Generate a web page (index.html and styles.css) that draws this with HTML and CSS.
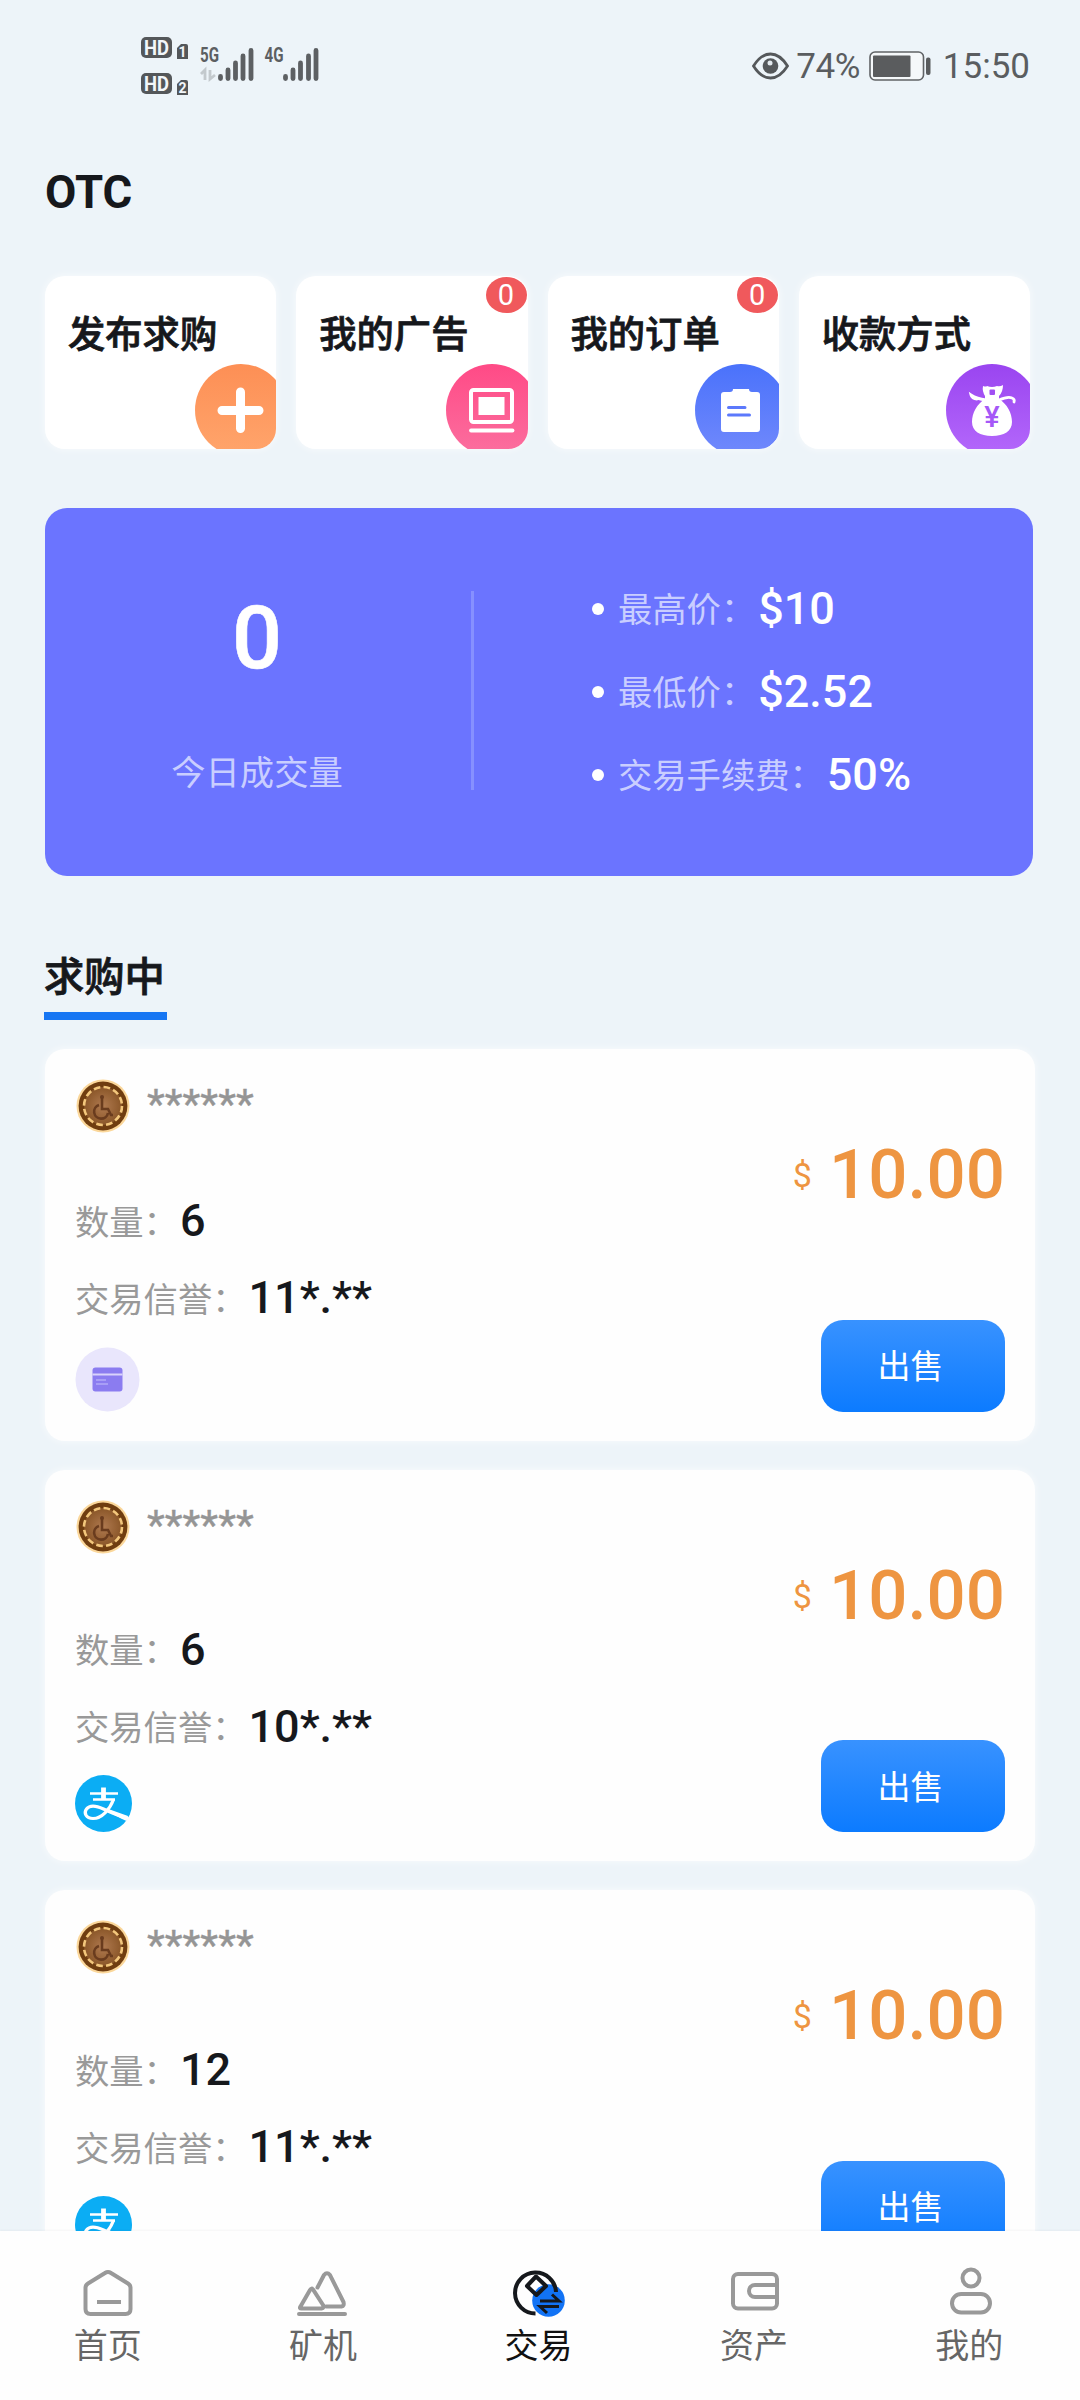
FILE: index.html
```html
<!DOCTYPE html>
<html lang="zh-CN">
<head>
<meta charset="utf-8">
<title>OTC</title>
<link rel="stylesheet" href="styles.css">
</head>
<body>
<svg class="defs" width="0" height="0" aria-hidden="true">
  <defs>
    <radialGradient id="coinFace"><stop offset="0" stop-color="#b07a50"/><stop offset="1" stop-color="#8a5628"/></radialGradient>
    <linearGradient id="orange" x1="0" y1="0" x2="0" y2="1"><stop offset="0" stop-color="#fd8f55"/><stop offset="1" stop-color="#ffa56c"/></linearGradient>
    <linearGradient id="pink" x1="0" y1="0" x2="0" y2="1"><stop offset="0" stop-color="#ff4a86"/><stop offset="1" stop-color="#fb6f9f"/></linearGradient>
    <linearGradient id="blue" x1="0" y1="0" x2="0" y2="1"><stop offset="0" stop-color="#4a72fb"/><stop offset="1" stop-color="#7189fc"/></linearGradient>
    <linearGradient id="violet" x1="0" y1="0" x2="0" y2="1"><stop offset="0" stop-color="#9a45f0"/><stop offset="1" stop-color="#b468fb"/></linearGradient>
  </defs>
  <symbol id="coin" viewBox="0 0 54 54">
    <circle cx="27" cy="27" r="26.5" fill="#fbd79a"/>
    <circle cx="27" cy="27" r="24.4" fill="#6f3d10"/>
    <circle cx="27" cy="27" r="19" fill="url(#coinFace)"/>
    <circle cx="27" cy="27" r="19" fill="none" stroke="#f3c77c" stroke-width="2.6" stroke-dasharray="6.6 3.348"/>
    <path d="M26 18v12h6l3 6h2M23 26a7 7 0 1 0 9 8" fill="none" stroke="#6a3c1e" stroke-width="2.6"/>
    <circle cx="26" cy="18" r="2" fill="#6a3c1e"/>
  </symbol>
  <symbol id="alipay" viewBox="0 0 57 57">
    <circle cx="28.5" cy="28.5" r="28.5" fill="#0badf4"/>
    <path d="M15 18.5h28M18 24.5h22" fill="none" stroke="#fff" stroke-width="2.6"/>
    <path d="M28.5 12.5v12" fill="none" stroke="#fff" stroke-width="4.8"/>
    <path d="M38.500 24.500C35 34 27 43.500 18 43.500C11 43.500 8.500 38 11.500 34C15 29.500 22 31 28.500 34C37 38 44 41 53.500 43.500" fill="none" stroke="#fff" stroke-width="3.2"/>
    <path d="M32 33.500L53 41L51.500 46C45 43.500 38 39 30 35.800z" fill="#fff"/>
  </symbol>
  <symbol id="bankcard" viewBox="0 0 65 65">
    <circle cx="32.500" cy="32.500" r="32" fill="#e9e6fc"/>
    <rect x="17.500" y="20.500" width="30" height="24" rx="3" fill="#8b7cf0"/>
    <path d="M17.500 27.500h30" stroke="#d9d3fb" stroke-width="2"/>
    <path d="M21 33h10M21 37h12" stroke="#b3a9f8" stroke-width="1.400"/>
  </symbol>
</svg>

<div class="screen">
  <header class="status">
    <svg class="status-left" width="200" height="70" viewBox="0 0 200 70">
      <g fill="#54575a">
        <rect x="1" y="5" width="31" height="21" rx="5"/>
        <rect x="1" y="41" width="31" height="21" rx="5"/>
        <path d="M37 16l4-4h5q2 0 2 2v13h-11zM37 52l4-4h5q2 0 2 2v13h-11z"/>
      </g>
      <g class="badge-text" fill="#f2f6fa">
        <text x="4" y="23" font-size="21" textLength="25" lengthAdjust="spacingAndGlyphs">HD</text>
        <text x="4" y="59" font-size="21" textLength="25" lengthAdjust="spacingAndGlyphs">HD</text>
        <text x="38.500" y="25" font-size="14">1</text>
        <text x="38.500" y="61" font-size="14">2</text>
      </g>
      <g class="badge-text" fill="#5c5f62">
        <text x="60" y="30" font-size="20" textLength="19" lengthAdjust="spacingAndGlyphs">5G</text>
        <text x="124.500" y="30" font-size="20" textLength="19" lengthAdjust="spacingAndGlyphs">4G</text>
      </g>
      <path d="M61 42l4-4v10M70 38v9l5-4" fill="none" stroke="#c3c9cd" stroke-width="2.800"/>
      <path d="M80.500 44.500v2M88 38v8.500M95.500 31v15.500M103 24v22.500M111 18.500v28M145.500 44.500v2M153 38v8.500M160.500 31v15.500M168.500 24v22.500M176 18.500v28" stroke="#5d6063" stroke-width="4.800" stroke-linecap="round"/>
    </svg>
    <div class="status-right">
      <svg width="37" height="28" viewBox="0 0 37 28">
        <path d="M1.500 14Q9 2 18.500 2T35.500 14Q28 26 18.500 26T1.500 14z" fill="none" stroke="#55585b" stroke-width="2.800"/>
        <circle cx="18.500" cy="14" r="7.800" fill="#55585b"/><circle cx="18" cy="11" r="2.500" fill="#e3e9ee"/>
      </svg>
      <span class="percent">74%</span>
      <svg class="battery" width="62" height="30" viewBox="0 0 62 30">
        <rect x="1" y="1" width="53.500" height="28" rx="5" fill="#f5f8fa" stroke="#606366" stroke-width="1.600"/>
        <rect x="4" y="4.500" width="37.500" height="21.500" rx="1" fill="#5a5c5e"/>
        <rect x="57" y="6.500" width="4.500" height="17.500" rx="2" fill="#5a5c5e"/>
      </svg>
      <span class="clock">15:50</span>
    </div>
  </header>

  <main class="content">
    <h1 class="page-title">OTC</h1>

    <section class="tiles">
      <div class="tile">
        <span>发布求购</span>
        <svg class="tile-icon" viewBox="0 0 92 92"><circle cx="46" cy="46" r="46" fill="url(#orange)"/><path d="M45.500 28v36.500M27 46.500h37" stroke="#fff" stroke-width="9" stroke-linecap="round"/></svg>
      </div>
      <div class="tile">
        <span>我的广告</span>
        <svg class="tile-icon" viewBox="0 0 92 92"><circle cx="46" cy="46" r="46" fill="url(#pink)"/><rect x="25" y="26" width="41" height="32" rx="2.500" fill="none" stroke="#fff" stroke-width="4"/><rect x="32.500" y="33" width="26" height="18" fill="#fff"/><path d="M25 66.500h41.500" stroke="#fff" stroke-width="3.800" stroke-linecap="round"/></svg>
        <b class="badge">0</b>
      </div>
      <div class="tile">
        <span>我的订单</span>
        <svg class="tile-icon wide" viewBox="0 0 92 92"><circle cx="46" cy="46" r="46" fill="url(#blue)"/><path d="M29 28h6q3 0 3-3h16q0 3 3 3h5q3 0 3 3v34q0 3-3 3H29q-3 0-3-3V31q0-3 3-3z" fill="#fff"/><path d="M33.500 43.500h16.500M33.500 51h21" stroke="#5c79fc" stroke-width="3" stroke-linecap="round"/></svg>
        <b class="badge">0</b>
      </div>
      <div class="tile">
        <span>收款方式</span>
        <svg class="tile-icon wide" viewBox="0 0 92 92"><circle cx="46" cy="46" r="46" fill="url(#violet)"/><path d="M37 22q3 1 4 0q5 2 10 0q3 1 6-1q0 7-4 11v3c8 5 13 14 13 23c0 9-8 14-20 14s-20-5-20-14c0-9 5-18 13-23v-3q-3-5-2-10z" fill="#fff"/><rect x="43.500" y="25.500" width="5.500" height="5.500" rx="1" fill="#a04ff3"/><path d="M40 36q-9-1-15-5q1 4 6 4M53 36q9-4 13-2q3 1 2 4" fill="none" stroke="#fff" stroke-width="2.800" stroke-linecap="round"/><text class="yen" x="46" y="62.500" font-size="29" text-anchor="middle" fill="#a558f7">¥</text></svg>
      </div>
    </section>

    <section class="summary">
      <div class="volume"><strong>0</strong><span>今日成交量</span></div>
      <i class="divider"></i>
      <ul class="stats">
        <li><span>最高价：</span><b>$10</b></li>
        <li><span>最低价：</span><b>$2.52</b></li>
        <li><span>交易手续费：</span><b>50%</b></li>
      </ul>
    </section>

    <h2 class="tab">求购中</h2>

    <section class="orders">
      <article class="order">
        <div class="info">
          <div class="user"><svg class="avatar"><use href="#coin"/></svg><span>******</span></div>
          <p><span>数量：</span><b>6</b></p>
          <p><span>交易信誉：</span><b>11*.**</b></p>
          <svg class="pay-bank"><use href="#bankcard"/></svg>
        </div>
        <div class="deal"><div class="price"><small>$</small>10.00</div><button>出售</button></div>
      </article>
      <article class="order">
        <div class="info">
          <div class="user"><svg class="avatar"><use href="#coin"/></svg><span>******</span></div>
          <p><span>数量：</span><b>6</b></p>
          <p><span>交易信誉：</span><b>10*.**</b></p>
          <svg class="pay-ali"><use href="#alipay"/></svg>
        </div>
        <div class="deal"><div class="price"><small>$</small>10.00</div><button>出售</button></div>
      </article>
      <article class="order">
        <div class="info">
          <div class="user"><svg class="avatar"><use href="#coin"/></svg><span>******</span></div>
          <p><span>数量：</span><b>12</b></p>
          <p><span>交易信誉：</span><b>11*.**</b></p>
          <svg class="pay-ali"><use href="#alipay"/></svg>
        </div>
        <div class="deal"><div class="price"><small>$</small>10.00</div><button>出售</button></div>
      </article>
    </section>
  </main>

  <nav class="tabbar">
    <a><svg viewBox="0 0 56 56"><path d="M5.500 25q0-3 2.500-4.500L25 10q3-2 6 0l17 10.500q2.500 1.500 2.500 4.500v21q0 5-5 5h-35q-5 0-5-5z"/><path d="M17 39h24"/></svg><span>首页</span></a>
    <a><svg viewBox="0 0 56 56"><path d="M5.500 43.500L15 27q1.500-2.500 3-.5L28 42q1.500 3-1.500 3.500h-20q-2.500 0-1-2zM22.500 24.500L29 12q3-3.500 6 0L48.500 39q1 4-2 4.500H31M4 51h46" stroke-linecap="round"/></svg><span>矿机</span></a>
    <a class="active"><svg viewBox="0 0 56 56"><circle cx="38.500" cy="37.500" r="16.300" fill="#1273f5" stroke="none"/><path d="M25.500 50.500A20.500 20.500 0 1 1 46 29"/><path d="M26 13.500l10 9.500-9.500 9-9.500-9z" stroke-linejoin="round"/><path d="M30 38h19l-7-6.500M49 43.500H30l7 6.500" stroke-width="3"/></svg><span>交易</span></a>
    <a><svg viewBox="0 0 56 56"><rect x="7" y="11" width="44" height="34.500" rx="5"/><path d="M50 22H29a6 6 0 0 0 0 12h21"/></svg><span>资产</span></a>
    <a><svg viewBox="0 0 56 56"><circle cx="30" cy="15" r="8.500"/><rect x="11" y="31" width="38" height="18.500" rx="9.200"/></svg><span>我的</span></a>
  </nav>
</div>
</body>
</html>
```
FILE: styles.css
```css
* { box-sizing: border-box; }

body {
  margin: 0;
  font-family: Roboto, "Noto Sans CJK SC", sans-serif;
  color: #16181c;
}

h1, h2, p, ul { margin: 0; padding: 0; }

.defs { position: absolute; }

.screen {
  display: flex;
  flex-direction: column;
  width: 1080px;
  height: 2400px;
  overflow: hidden;
  background: #edf4f9;
}

/* status bar */
.status {
  display: flex;
  flex: none;
  justify-content: space-between;
  height: 132px;
  padding: 32px 50px 0 140px;
  color: #5a5d60;
}

.status-left .badge-text { font-weight: 700; }
.status-right { display: flex; align-items: center; height: 68px; font-size: 35px; }
.percent { margin-left: 7px; letter-spacing: -0.5px; }
.battery { margin: 0 12px 0 9px; }

/* page */
.content { flex: 1; min-height: 0; padding: 0 47px 0 45px; overflow: hidden; }

.page-title {
  height: 144px;
  padding-top: 31px;
  font-size: 45.500px;
  line-height: 60px;
  font-weight: 700;
}

.tiles {
  display: grid;
  grid-template-columns: repeat(4, 1fr);
  gap: 20px;
  height: 173px;
  margin-right: 3px;
}

.tile {
  position: relative;
  overflow: hidden;
  padding: 34px 23px;
  border-radius: 20px;
  background: #fff;
  box-shadow: 0 0 8px rgba(255, 255, 255, .7);
  font-size: 37.300px;
  line-height: 50px;
  font-weight: 500;
  -webkit-text-stroke: .8px currentColor;
  white-space: nowrap;
}

.tile-icon { position: absolute; left: 150px; top: 88px; width: 92px; height: 92px; -webkit-text-stroke: 0; }
.tile-icon.wide { left: 147px; }
.yen { font-weight: 500; }

.badge {
  position: absolute;
  top: 1px;
  right: 1px;
  width: 41px;
  height: 36px;
  border-radius: 50%;
  background: #f0595c;
  color: #fff;
  font-size: 29px;
  line-height: 37px;
  font-weight: 400;
  -webkit-text-stroke: 0;
  text-align: center;
}

/* summary */
.summary {
  display: flex;
  width: 988px;
  height: 368px;
  margin-top: 59px;
  border-radius: 22px;
  background: #6b74ff;
  color: #fff;
}

.volume {
  display: flex;
  flex-direction: column;
  align-items: center;
  width: 424px;
  padding-top: 80px;
}

.volume strong { font-size: 88px; line-height: 100px; font-weight: 500; -webkit-text-stroke: .6px currentColor; }
.volume span { margin-top: 60px; font-size: 34.300px; line-height: 50px; color: #c9ceff; }
.divider { width: 3px; height: 199px; margin: 83px 0 0 2px; background: #8690ff; }

.stats {
  display: flex;
  flex-direction: column;
  margin: 59px 0 0 118px;
  list-style: none;
}

.stats li { display: flex; align-items: center; height: 83px; font-size: 34.300px; color: #c9ceff; }
.stats li::before { content: ""; width: 12px; height: 12px; margin-right: 14px; border-radius: 50%; background: #fff; }
.stats span { padding-bottom: 3px; }
.stats b { margin-left: 3px; padding-bottom: 1px; font-size: 45px; font-weight: 500; color: #fff; }

/* orders */
.tab {
  width: 123px;
  height: 77px;
  margin: 67px 0 0 -1px;
  padding-top: 2px;
  border-bottom: 8px solid #1776f3;
  font-size: 40.300px;
  line-height: 66px;
  font-weight: 500;
  -webkit-text-stroke: .8px currentColor;
  white-space: nowrap;
}

.orders { display: flex; flex-direction: column; gap: 29px; width: 990px; margin-top: 29px; }

.order {
  display: flex;
  justify-content: space-between;
  height: 391.500px;
  padding: 30px 30px 29px;
  border-radius: 20px;
  background: #fefefe;
  box-shadow: 0 0 8px rgba(255, 255, 255, .7);
}

.info { display: flex; flex-direction: column; }
.user { display: flex; margin: 0 0 auto 1px; }
.avatar { width: 54px; height: 54px; }
.user span { margin-left: 17px; font-size: 41.300px; line-height: 50px; color: #959595; -webkit-text-stroke: .4px currentColor; }
.info p { display: flex; align-items: center; height: 77px; font-size: 34.300px; color: #999; }
.info span { padding-bottom: 3px; }
.info b { margin-left: 2px; padding-bottom: 1px; font-size: 45px; font-weight: 500; color: #16181c; }
.pay-bank { width: 65px; height: 65px; margin-top: 10px; }
.pay-ali { width: 57px; height: 57px; margin-top: 10px; }

.deal { display: flex; flex-direction: column; align-items: flex-end; justify-content: space-between; }
.price { display: flex; align-items: center; margin-top: 56px; font-size: 69px; line-height: 80px; font-weight: 500; color: #ee9541; }
.price small { margin-right: 17px; font-size: 34px; font-weight: 400; }

.deal button {
  width: 184px;
  height: 92px;
  padding: 0 5px 3px 0;
  border: 0;
  border-radius: 22px;
  background: linear-gradient(#3892ff, #0c7bff);
  color: #fff;
  font: 33px Roboto, "Noto Sans CJK SC", sans-serif;
}

/* bottom navigation */
.tabbar {
  display: grid;
  grid-template-columns: repeat(5, 1fr);
  flex: none;
  height: 169px;
  padding: 32px 3px 0 0;
  background: #fefefe;
  box-shadow: 0 -1px 2px rgba(0, 0, 0, .04);
}

.tabbar a { display: flex; flex-direction: column; align-items: center; font-size: 34px; line-height: 50px; color: #666; }
.tabbar svg { width: 56px; height: 56px; margin-bottom: 2px; fill: none; stroke: #999; stroke-width: 4; }
.tabbar .active { color: #111; }
.tabbar .active svg { stroke: #15181c; }
```
